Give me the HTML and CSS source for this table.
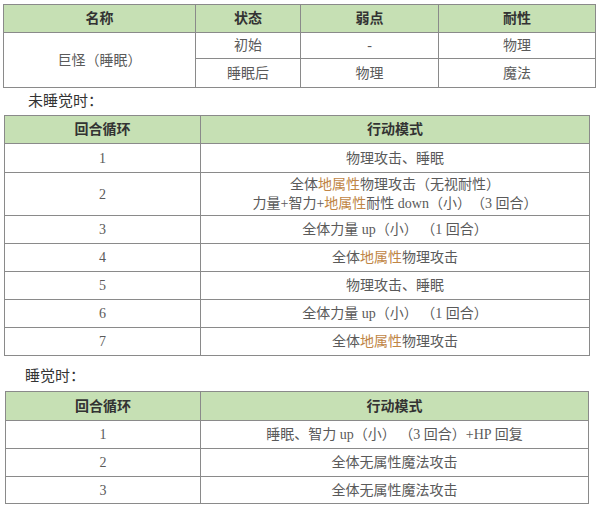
FILE: index.html
```html
<!DOCTYPE html>
<html lang="zh">
<head>
<meta charset="utf-8">
<link rel="stylesheet" href="styles.css">
</head>
<body>
<div class="page">
  <table class="grid t1">
    <colgroup><col style="width:192px"><col style="width:105px"><col style="width:138px"><col style="width:157px"></colgroup>
    <tr class="head h28"><th>名称</th><th>状态</th><th>弱点</th><th>耐性</th></tr>
    <tr class="h26"><td rowspan="2">巨怪（睡眠）</td><td>初始</td><td>-</td><td>物理</td></tr>
    <tr class="h29"><td>睡眠后</td><td>物理</td><td>魔法</td></tr>
  </table>

  <p class="label l1">未睡觉时：</p>

  <table class="grid t2">
    <colgroup><col style="width:196px"><col style="width:389px"></colgroup>
    <tr class="head h28"><th>回合循环</th><th>行动模式</th></tr>
    <tr class="h29"><td>1</td><td>物理攻击、睡眠</td></tr>
    <tr class="h43"><td>2</td><td>全体<span class="earth">地属性</span>物理攻击（无视耐性）<br>力量+智力+<span class="earth">地属性</span>耐性 down（小）（3 回合）</td></tr>
    <tr class="h28"><td>3</td><td>全体力量 up（小） （1 回合）</td></tr>
    <tr class="h28"><td>4</td><td>全体<span class="earth">地属性</span>物理攻击</td></tr>
    <tr class="h28"><td>5</td><td>物理攻击、睡眠</td></tr>
    <tr class="h28"><td>6</td><td>全体力量 up（小） （1 回合）</td></tr>
    <tr class="h28"><td>7</td><td>全体<span class="earth">地属性</span>物理攻击</td></tr>
  </table>

  <p class="label l2">睡觉时：</p>

  <table class="grid t3">
    <colgroup><col style="width:195px"><col style="width:388px"></colgroup>
    <tr class="head h29"><th>回合循环</th><th>行动模式</th></tr>
    <tr class="h28"><td>1</td><td>睡眠、智力 up（小） （3 回合）+HP 回复</td></tr>
    <tr class="h28"><td>2</td><td>全体无属性魔法攻击</td></tr>
    <tr class="h27"><td>3</td><td>全体无属性魔法攻击</td></tr>
  </table>
</div>
</body>
</html>
```
FILE: styles.css
```css
html, body {
  margin: 0;
  padding: 0;
  background: #ffffff;
}

.page {
  width: 600px;
  height: 510px;
  padding-top: 4px;
  box-sizing: border-box;
  font-family: "Liberation Serif", "Noto Sans CJK SC", serif;
  font-size: 14px;
  color: #5a5a5a;
  text-spacing-trim: space-all;
}

.grid {
  border-collapse: collapse;
  table-layout: fixed;
}

.grid th,
.grid td {
  border: 1px solid #8a8a8a;
  padding: 0;
  text-align: center;
  vertical-align: middle;
  line-height: 19px;
}

.grid th {
  background: #c6e0b4;
  color: #333333;
  font-weight: bold;
  font-size: 14px;
}

.t1 { margin-left: 3px; width: 593px; }
.t2 { margin-left: 4px; width: 586px; }
.t3 { margin-left: 5px; width: 584px; }

.h26 { height: 26px; }
.h27 { height: 27px; }
.h28 { height: 28px; }
.h29 { height: 29px; }
.h43 { height: 43px; }

.label {
  margin: 0;
  font-size: 15px;
  line-height: 20px;
  color: #333333;
}

.l1 { padding: 3px 0 0 28px; height: 27px; box-sizing: border-box; }
.l2 { padding: 10px 0 0 25px; height: 35px; box-sizing: border-box; }

.earth { color: #c08545; }
```
